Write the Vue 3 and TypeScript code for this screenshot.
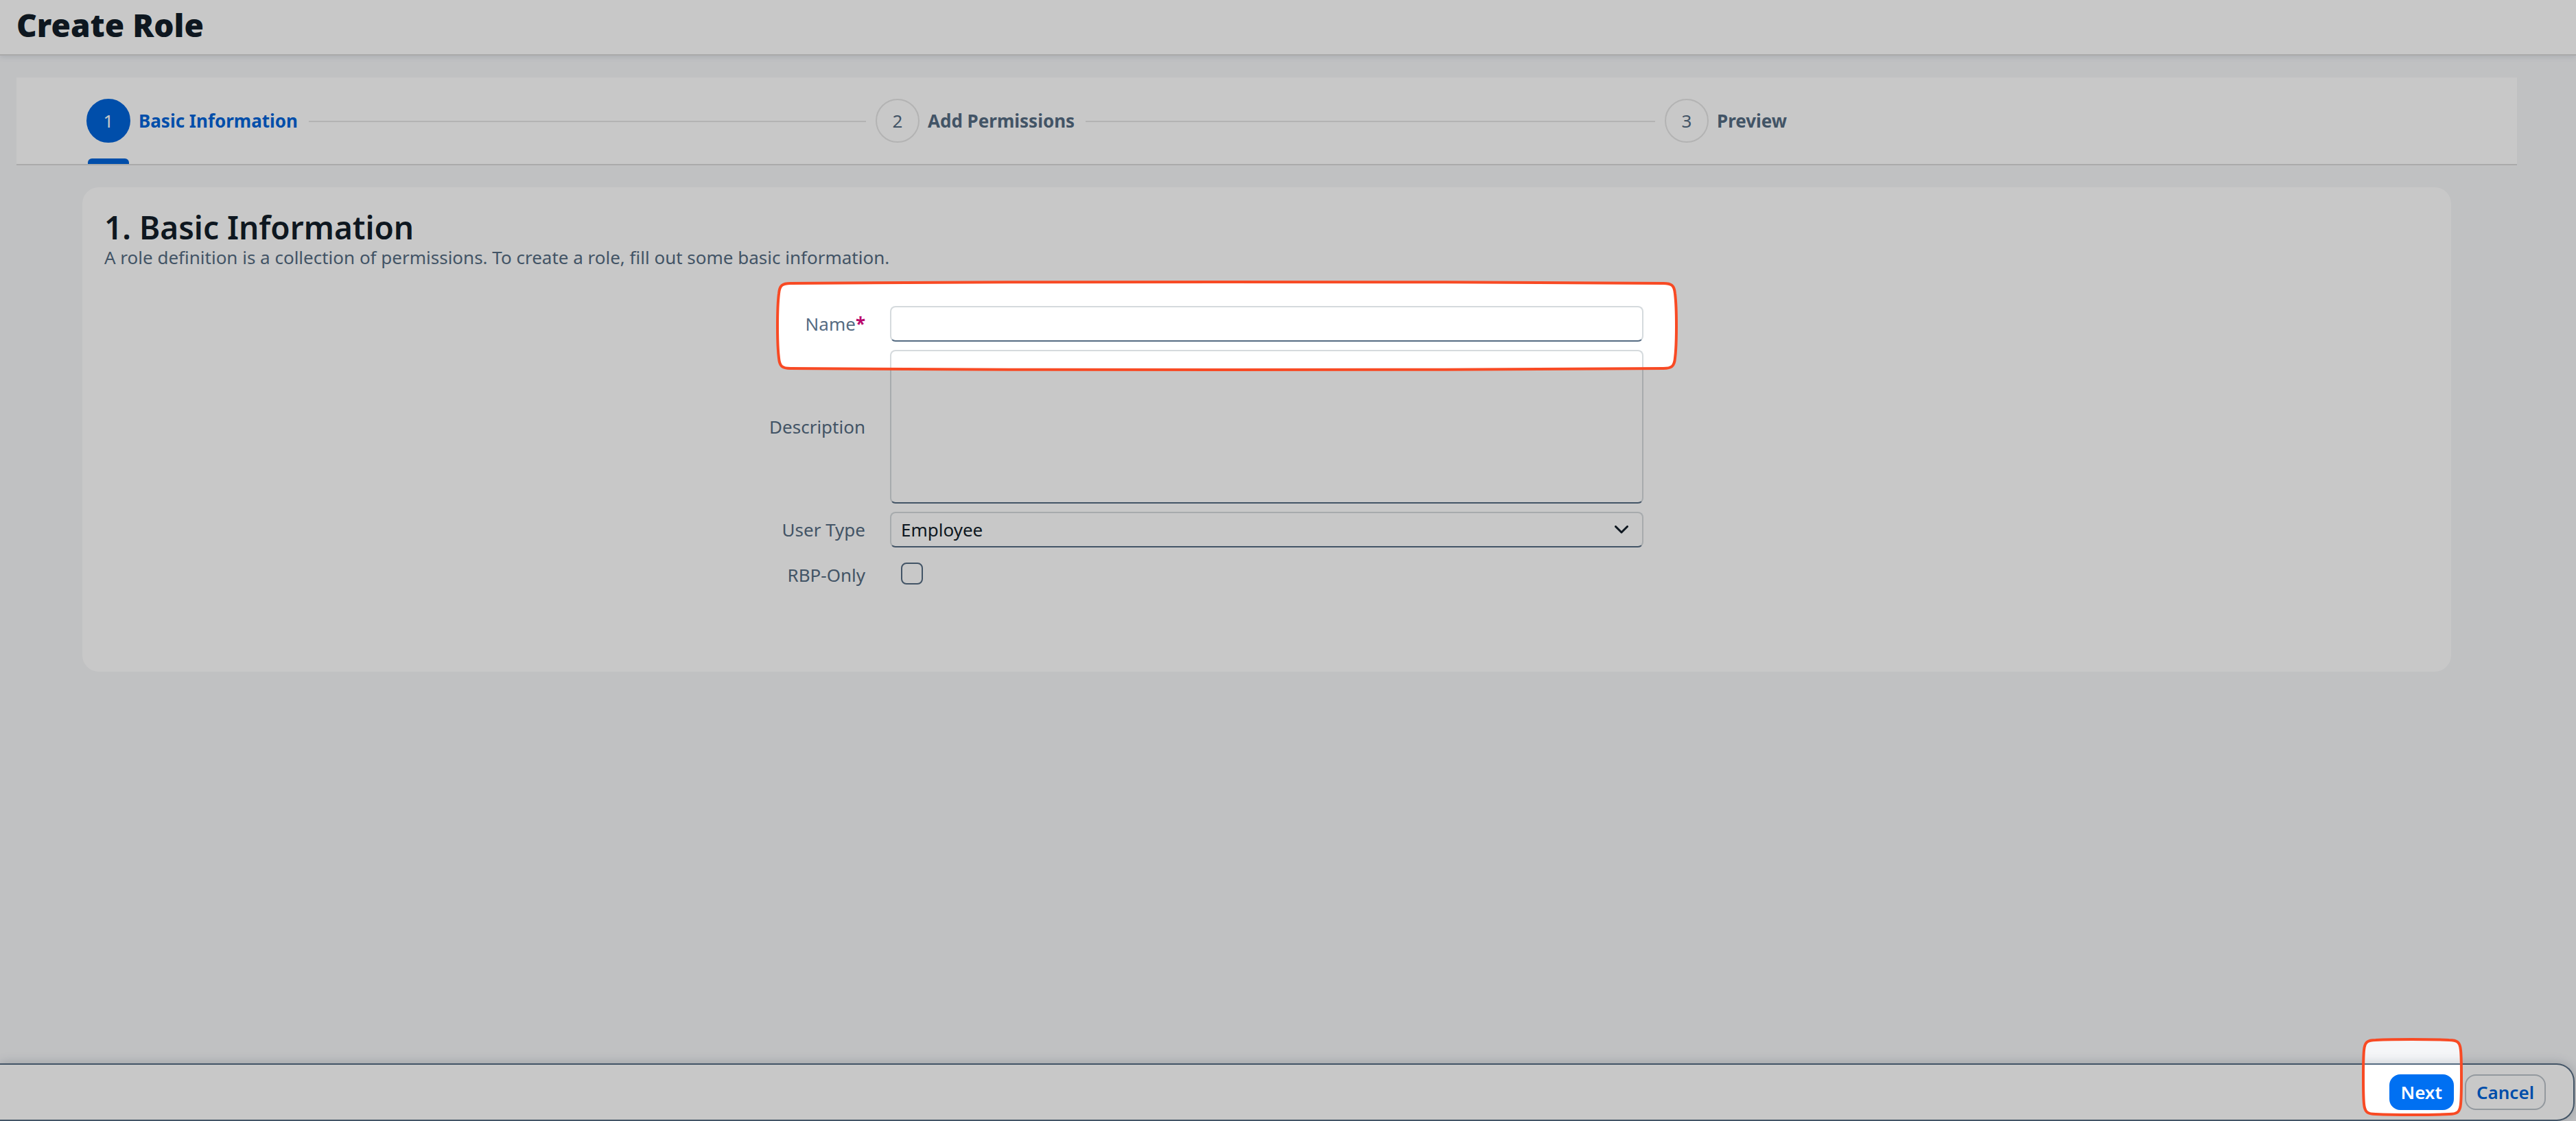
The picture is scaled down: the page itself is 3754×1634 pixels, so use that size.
<script setup lang="ts">
import { ref } from 'vue'

const steps = ['Basic Information', 'Add Permissions', 'Preview']
const current = ref(0)
const name = ref('')
const description = ref('')
const userType = ref('Employee')
const rbpOnly = ref(false)

// Highlight outlines, each hung from an anchor point of the window.
const spots = [
  {
    x: '50%',
    y: '0',
    shift: 'translate(-747 408)',
    path: 'M3 67C3 45 4 28 5 20C6 8 10 5 22 5C240 3 440 3 658 3S1076 3 1294 5C1306 5 1310 8 1311 20C1312 28 1313 45 1313 67S1312 106 1311 114C1310 126 1306 129 1294 129C1076 131 876 131 658 131S240 131 22 129C10 129 6 126 5 114C4 106 3 89 3 67Z',
  },
  {
    x: '100%',
    y: '100%',
    shift: 'translate(-312 -121)',
    path: 'M2 57C2 40 2 28 3 18C4 6 8 3 20 3C40 2 55 2 73 2S107 2 127 3C139 3 143 6 144 18C145 28 145 40 145 57S145 86 144 96C143 108 139 111 127 111C107 112 92 112 73 112S40 112 20 111C8 111 4 108 3 96C2 86 2 74 2 57Z',
  },
]
</script>

<template>
  <div class="page">
    <header class="header">
      <h1>Create Role</h1>
    </header>

    <main class="content">
      <nav class="stepper" aria-label="Progress">
        <ol>
          <li v-for="(step, i) in steps" :key="step" class="step" :class="{ active: i === current }">
            <span class="number">{{ i + 1 }}</span>
            <span class="step-label">{{ step }}</span>
            <span v-if="i < steps.length - 1" class="line"></span>
          </li>
        </ol>
      </nav>

      <section class="card">
        <h2>1. Basic Information</h2>
        <p>A role definition is a collection of permissions. To create a role, fill out some basic information.</p>
        <form id="role-form" class="form" @submit.prevent>
          <div class="row">
            <label for="name">Name<span class="required">*</span></label>
            <input id="name" v-model="name" class="field" type="text" />
          </div>
          <div class="row">
            <label for="description">Description</label>
            <textarea id="description" v-model="description" class="field area"></textarea>
          </div>
          <div class="row">
            <label for="user-type">User Type</label>
            <div class="select">
              <select id="user-type" v-model="userType" class="field">
                <option>Employee</option>
              </select>
              <svg class="chevron" viewBox="0 0 20 12" aria-hidden="true">
                <path d="M1.5 1.5 10 10 18.5 1.5" fill="none" stroke="#131e29" stroke-width="3" stroke-linecap="round" stroke-linejoin="round" />
              </svg>
            </div>
          </div>
          <div class="row">
            <label for="rbp-only">RBP-Only</label>
            <div class="check">
              <input id="rbp-only" v-model="rbpOnly" type="checkbox" />
            </div>
          </div>
        </form>
      </section>
    </main>

    <footer class="footer">
      <button class="button primary" type="submit" form="role-form">Next</button>
      <button class="button" type="button">Cancel</button>
    </footer>

    <svg class="tour" aria-hidden="true">
      <defs>
        <mask id="spots" maskUnits="userSpaceOnUse" x="0" y="0" width="100%" height="100%">
          <rect width="100%" height="100%" fill="#fff" />
          <svg v-for="spot in spots" :key="spot.x" :x="spot.x" :y="spot.y" overflow="visible">
            <path :d="spot.path" :transform="spot.shift" fill="#000" />
          </svg>
        </mask>
      </defs>
      <rect width="100%" height="100%" fill="#000" fill-opacity="0.216" mask="url(#spots)" />
      <svg v-for="spot in spots" :key="spot.x" :x="spot.x" :y="spot.y" overflow="visible">
        <path :d="spot.path" :transform="spot.shift" class="ring" />
      </svg>
    </svg>
  </div>
</template>

<style>
body {
  margin: 0;
}
</style>

<style scoped>
* {
  box-sizing: border-box;
}

.page {
  position: relative;
  display: flex;
  flex-direction: column;
  min-height: 100vh;
  overflow: hidden;
  background: #f5f6f8;
  color: #131e29;
  font-family: "Noto Sans", sans-serif;
  font-size: 26px;
  line-height: 32px;
}

.header {
  padding: 4px 24px 11px;
  background: #fff;
  border-bottom: 2px solid #d9d9d9;
  box-shadow: 0 2px 8px rgba(85, 107, 130, 0.16);
}

h1,
h2,
p {
  margin: 0;
}

h1 {
  font-size: 46px;
  line-height: 64px;
  font-weight: 900;
}

.content {
  flex: 1;
  padding: 32px 0;
}

.stepper {
  margin: 0 86px 0 24px;
  padding: 0 92px 0 102px;
  background: #fff;
  border-bottom: 2px solid #d9d9d9;
}

.stepper ol {
  display: flex;
  margin: 0;
  padding: 0;
  list-style: none;
}

.step {
  position: relative;
  flex: 1;
  display: flex;
  align-items: center;
  height: 126px;
  color: #556b82;
}

.number {
  display: flex;
  align-items: center;
  justify-content: center;
  width: 64px;
  height: 64px;
  border: 2px solid #e5e5e5;
  border-radius: 50%;
}

.step-label {
  margin-left: 12px;
  font-weight: 700;
}

.line {
  flex: 1;
  height: 2px;
  margin: 2px 14px 0 16px;
  background: #e5e5e5;
}

.step.active {
  color: #0064d9;
}

.step.active .number {
  background: #0064d9;
  border-color: #0064d9;
  color: #fff;
}

.step.active::after {
  content: "";
  position: absolute;
  left: 2px;
  bottom: 0;
  width: 60px;
  height: 8px;
  border-radius: 6px 6px 0 0;
  background: #0064d9;
}

.card {
  margin: 32px 182px 0 120px;
  padding: 30px 32px 113px;
  border-radius: 24px;
  background: #fff;
}

h2 {
  font-size: 46px;
  line-height: 56px;
  font-weight: 600;
}

.card p {
  color: #556b82;
}

.form {
  display: flex;
  flex-direction: column;
  gap: 12px;
  margin-top: 55px;
}

.row {
  display: grid;
  grid-template-columns: 1fr minmax(0, 1098px) 1fr;
  align-items: center;
}

label {
  padding-right: 36px;
  color: #556b82;
  text-align: right;
}

.required {
  color: #ba066c;
  font-weight: 700;
}

.field {
  display: block;
  width: 100%;
  height: 52px;
  padding: 0 14px;
  border: 2px solid #d5dadd;
  border-bottom-color: #556b82;
  border-radius: 8px;
  outline: 0;
  background: #fff;
  color: #131e29;
  font: inherit;
}

.area {
  height: 224px;
  padding: 10px 14px;
  resize: none;
}

.select {
  position: relative;
}

select.field {
  appearance: none;
}

.chevron {
  position: absolute;
  top: 20px;
  right: 22px;
  width: 20px;
  height: 12px;
  pointer-events: none;
}

.check {
  display: flex;
  padding: 10px 0 14px 16px;
}

.check input {
  appearance: none;
  width: 32px;
  height: 32px;
  margin: 0;
  border: 2px solid #556b82;
  border-radius: 8px;
  background: #fff;
}

.footer {
  display: flex;
  justify-content: flex-end;
  gap: 16px;
  margin-right: 2px;
  padding: 14px 40px 14px 0;
  border: 2px solid #556b82;
  border-left: 0;
  border-radius: 0 26px 26px 0;
  background: #fff;
  box-shadow: 0 0 16px rgba(34, 53, 72, 0.24);
}

.button {
  height: 52px;
  padding: 0 15px;
  border: 2px solid #bcc3ca;
  border-radius: 16px;
  background: #fff;
  color: #0064d9;
  font: inherit;
  font-weight: 600;
}

.button.primary {
  border-color: #0070f2;
  background: #0070f2;
  color: #fff;
}

.tour {
  position: absolute;
  inset: 0;
  width: 100%;
  height: 100%;
  pointer-events: none;
}

.ring {
  fill: none;
  stroke: #f84a24;
  stroke-width: 4px;
}
</style>
